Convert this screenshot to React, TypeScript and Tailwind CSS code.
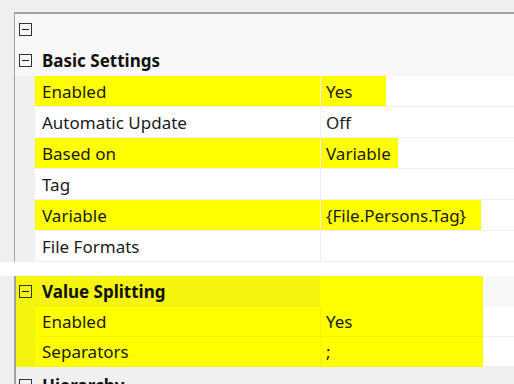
import React from 'react';

type Row = {
  kind: 'cat' | 'prop';
  name?: string;
  value?: string;
  hl?: number; // width of yellow on the value cell
};

const topRows: Row[] = [
  { kind: 'cat' },
  { kind: 'cat', name: 'Basic Settings' },
  { kind: 'prop', name: 'Enabled', value: 'Yes', hl: 65 },
  { kind: 'prop', name: 'Automatic Update', value: 'Off' },
  { kind: 'prop', name: 'Based on', value: 'Variable', hl: 77 },
  { kind: 'prop', name: 'Tag', value: '' },
  { kind: 'prop', name: 'Variable', value: '{File.Persons.Tag}', hl: 160 },
  { kind: 'prop', name: 'File Formats', value: '' },
];

function Box() {
  return (
    <span className="w-[13px] h-[13px] border border-[#333] flex items-center justify-center bg-transparent">
      <span className="w-[7px] h-px bg-[#222]" />
    </span>
  );
}

function GridRow({ row }: { row: Row }) {
  if (row.kind === 'cat') {
    return (
      <div className="flex h-[31px] bg-[#f7f7f7] items-center">
        <div className="w-[20px] h-full flex items-center justify-center">
          <Box />
        </div>
        <div className="pl-[7px] font-bold text-[#111]">{row.name}</div>
      </div>
    );
  }
  const yellow = row.hl !== undefined;
  return (
    <div className="flex h-[31px]">
      <div className="w-[20px] h-full bg-[#f0f0f0]" />
      <div
        className={
          'w-[285px] h-full flex items-center pl-[7px] border-b border-[#f0f0f0] ' +
          (yellow ? 'bg-[#ffff00]' : 'bg-white')
        }
      >
        {row.name}
      </div>
      <div className="flex-1 h-full border-l border-b border-[#f0f0f0] bg-white relative">
        {yellow && <div className="absolute left-0 top-0 bottom-0 bg-[#ffff00]" style={{ width: row.hl }} />}
        <div className="relative h-full flex items-center pl-[5px]">{row.value}</div>
      </div>
    </div>
  );
}

export default function App() {
  return (
    <div
      className="w-[514px] h-[384px] overflow-hidden bg-white text-[17px] text-[#1a1a1a] leading-none"
      style={{ fontFamily: '"Noto Sans", "Open Sans", sans-serif' }}
    >
      {/* top property grid */}
      <div className="h-[12px] bg-[#efefef]" />
      <div className="flex">
        <div className="w-[14px] bg-[#efefef]" />
        <div className="flex-1 border-l border-t-2 border-[#a3a3a3]">
          {topRows.map((r, i) => (
            <GridRow key={i} row={r} />
          ))}
        </div>
      </div>

      <div className="h-[14px] bg-white" />

      {/* second snippet */}
      <div className="flex">
        <div className="w-[14px] bg-[#efefef]" />
        <div className="flex-1 border-l-2 border-[#a3a3a3]">
          <div className="flex h-[31px] items-stretch">
            <div className="w-[304px] bg-[#f4f40e] flex items-center">
              <div className="w-[19px] flex justify-center">
                <Box />
              </div>
              <div className="pl-[7px] font-bold text-[#111]">Value Splitting</div>
            </div>
            <div className="w-[163px] bg-[#ffff00]" />
            <div className="flex-1 bg-[#f8f8f8]" />
          </div>
          {[
            ['Enabled', 'Yes'],
            ['Separators', ';'],
          ].map(([n, v]) => (
            <div key={n} className="flex h-[30px]">
              <div className="w-[19px] bg-[#f4f40e]" />
              <div className="w-[285px] bg-[#ffff00] flex items-center pl-[7px] border-b border-[#f4f400]">{n}</div>
              <div className="w-[163px] bg-[#ffff00] flex items-center pl-[5px] border-l border-b border-[#f4f400]">{v}</div>
              <div className="flex-1 bg-white border-b border-[#f0f0f0]" />
            </div>
          ))}
          <div className="flex h-[31px] bg-[#f0f0f0] items-start pt-[10px]">
            <div className="w-[19px] flex justify-center pt-[2px]">
              <Box />
            </div>
            <div className="pl-[7px] font-bold text-[#111]">Hierarchy</div>
          </div>
        </div>
      </div>
    </div>
  );
}
